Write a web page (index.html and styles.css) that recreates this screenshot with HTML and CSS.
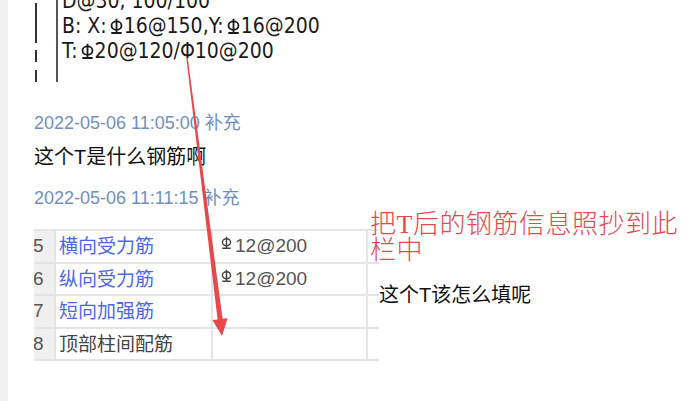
FILE: index.html
```html
<!DOCTYPE html>
<html lang="zh">
<head>
<meta charset="utf-8">
<link rel="stylesheet" href="styles.css">
</head>
<body>
<svg class="defs" width="0" height="0" aria-hidden="true">
  <defs>
    <symbol id="hrb" viewBox="0 0 12 16">
      <path d="M6 0.8V15M0.8 15H11.2" fill="none" stroke="currentColor" stroke-width="1.8"/>
      <ellipse cx="6" cy="7.6" rx="5" ry="4.3" fill="none" stroke="currentColor" stroke-width="1.8"/>
    </symbol>
  </defs>
</svg>
<div class="page">
  <div class="rail"></div>
  <div class="main">
    <div class="snippet">
      <div class="dash"></div>
      <div class="bar"></div>
      <div class="cad">
        <div class="cad-line">D@30, 100/100</div>
        <div class="cad-line">B: X:<svg class="hrb"><use href="#hrb"/></svg>16@150,Y:<svg class="hrb"><use href="#hrb"/></svg>16@200</div>
        <div class="cad-line">T:<svg class="hrb"><use href="#hrb"/></svg>20@120/Φ10@200</div>
      </div>
    </div>
    <div class="ts ts-first">2022-05-06 11:05:00 补充</div>
    <div class="msg">这个T是什么钢筋啊</div>
    <div class="ts ts-second">2022-05-06 11:11:15 补充</div>
    <div class="table-row">
      <div class="table-clip">
        <div class="grid">
          <div class="cell idx">5</div>
          <div class="cell name link">横向受力筋</div>
          <div class="cell val"><svg class="hrb-sm"><use href="#hrb"/></svg>12@200</div>
          <div class="cell"></div>

          <div class="cell idx">6</div>
          <div class="cell name link">纵向受力筋</div>
          <div class="cell val"><svg class="hrb-sm"><use href="#hrb"/></svg>12@200</div>
          <div class="cell"></div>

          <div class="cell idx">7</div>
          <div class="cell name link">短向加强筋</div>
          <div class="cell val"></div>
          <div class="cell"></div>

          <div class="cell idx">8</div>
          <div class="cell name">顶部柱间配筋</div>
          <div class="cell val"></div>
          <div class="cell"></div>
        </div>
      </div>
      <div class="side">
        <div class="note">把T后的钢筋信息照抄到此栏中</div>
        <div class="question">这个T该怎么填呢</div>
      </div>
    </div>
  </div>
  <svg class="arrow" width="694" height="401" viewBox="0 0 694 401" aria-hidden="true">
    <polygon points="187.7,57.9 222.6,318.8 227.6,318.2 222,336 212.4,320.1 217.6,319.4 186.3,58.1" fill="#e8474b"/>
  </svg>
</div>
</body>
</html>
```

FILE: styles.css
```css
html, body {
  margin: 0;
  padding: 0;
  background: #ffffff;
}

body {
  width: 694px;
  height: 401px;
  overflow: hidden;
}

.defs {
  position: absolute;
  width: 0;
  height: 0;
}

.page {
  position: relative;
  display: flex;
  width: 694px;
  height: 401px;
}

.rail {
  width: 8px;
  flex: 0 0 8px;
  background: #f1f1f2;
}

.main {
  flex: 1;
  padding-left: 26px;
}

/* CAD picture */
.snippet {
  display: flex;
  height: 82px;
  overflow: hidden;
  padding-left: 1px;
}

.dash {
  width: 2px;
  flex: 0 0 2px;
  margin-right: 19px;
  background: linear-gradient(to bottom,
    transparent 0, transparent 3px,
    #333 3px, #333 43px,
    transparent 43px, transparent 50px,
    #333 50px, #333 62px,
    transparent 62px, transparent 70px,
    #333 70px, #333 82px);
}

.bar {
  width: 2px;
  flex: 0 0 2px;
  margin-right: 4px;
  background: #555;
}

.cad {
  margin-top: -11px;
  font-family: "DejaVu Sans Condensed", "DejaVu Sans", sans-serif;
  font-stretch: condensed;
  font-size: 21px;
  line-height: 25px;
  color: #1a1a1a;
  white-space: nowrap;
}

.hrb {
  width: 13px;
  height: 16px;
  margin: 0 1px 0 3px;
  vertical-align: -1px;
}

/* messages */
.ts {
  font-family: "Liberation Sans", "Noto Sans CJK SC", sans-serif;
  font-size: 18px;
  line-height: 24px;
  color: #7190c0;
}

.ts-first {
  margin-top: 29px;
}

.ts-second {
  margin-top: 15px;
}

.msg {
  margin-top: 8px;
  font-family: "Liberation Sans", "Noto Sans CJK SC", sans-serif;
  font-size: 20px;
  line-height: 28px;
  color: #111;
}

/* table */
.table-row {
  display: flex;
  margin-top: 19px;
}

.table-clip {
  width: 345px;
  flex: 0 0 345px;
  height: 134px;
  overflow: hidden;
}

.grid {
  display: grid;
  grid-template-columns: 26px 157px 155px 120px;
  grid-auto-rows: 32.5px;
  width: 458px;
  margin-left: -4px;
  border-top: 2px solid #e5e5e5;
  font-family: "Liberation Sans", "Noto Sans CJK SC", sans-serif;
  font-size: 19px;
  line-height: 22px;
}

.cell {
  box-sizing: border-box;
  display: flex;
  align-items: center;
  border-right: 2px solid #e5e5e5;
  border-bottom: 2px solid #e5e5e5;
  white-space: nowrap;
  color: #444;
}

.idx {
  background: #f0f0f0;
  padding-left: 3px;
  color: #555;
}

.name {
  padding-left: 3px;
  padding-top: 2px;
}

.link {
  color: #4d68ee;
}

.val {
  align-items: flex-start;
  padding-left: 7px;
  padding-top: 4px;
  color: #555;
}

.hrb-sm {
  width: 13px;
  height: 13px;
  margin-right: 2px;
  margin-top: 1px;
  flex: 0 0 13px;
  color: #444;
}

/* annotations */
.side {
  position: relative;
  flex: 1;
}

.note {
  position: absolute;
  left: -9px;
  top: -17px;
  width: 330px;
  font-family: "Liberation Serif", "Noto Sans CJK SC", serif;
  font-size: 26px;
  font-weight: 300;
  line-height: 26px;
  letter-spacing: 0.5px;
  color: #e8494d;
}

.question {
  margin-top: 52px;
  font-family: "Liberation Sans", "Noto Sans CJK SC", sans-serif;
  font-size: 20px;
  line-height: 28px;
  color: #111;
}

.arrow {
  position: absolute;
  left: 0;
  top: 0;
  pointer-events: none;
}
```
